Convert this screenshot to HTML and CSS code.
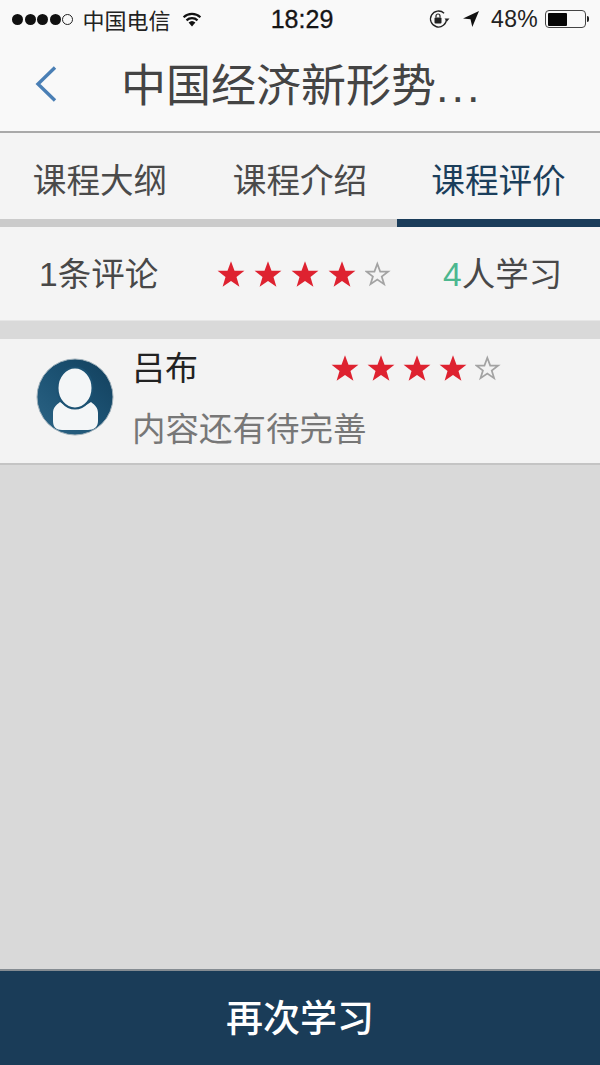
FILE: index.html
```html
<!DOCTYPE html>
<html lang="zh-CN">
<head>
<meta charset="utf-8">
<title>中国经济新形势</title>
<link rel="stylesheet" href="styles.css">
</head>
<body>
<div class="app">
  <header class="top">
    <div class="status">
      <div class="status-left">
        <span class="signal"><i></i><i></i><i></i><i></i><i class="off"></i></span>
        <span class="carrier">中国电信</span>
        <svg class="wifi" width="22" height="16" viewBox="0 0 22 16"><path d="M11 15.500 7.600 11.600a5 5 0 0 1 6.800 0z" fill="#111"/><path d="M5.500 9.400a8 8 0 0 1 11 0M2.600 6.200a12.400 12.400 0 0 1 16.800 0" fill="none" stroke="#111" stroke-width="2.200"/></svg>
      </div>
      <span class="clock">18:29</span>
      <div class="status-right">
        <svg class="lock" width="22" height="20" viewBox="0 0 22 20"><path d="M18.500 10a8 8 0 1 1-2.400-5.700" fill="none" stroke="#222" stroke-width="1.300"/><path d="M21.500 9.500h-5l2.500 3z" fill="#222"/><rect x="6.500" y="8.500" width="7" height="6" rx="1" fill="#222"/><path d="M8 8.500V7a2 2 0 0 1 4 0v1.500" fill="none" stroke="#222" stroke-width="1.200"/></svg>
        <svg class="arrow" width="18" height="18" viewBox="0 0 18 18"><path d="M17 1 1 8.500l7.500.8 1.800 7.700z" fill="#111"/></svg>
        <span class="pct">48%</span>
        <span class="battery"><span class="level"></span></span>
        <span class="nub"></span>
      </div>
    </div>
    <div class="nav">
      <svg class="back" width="24" height="38" viewBox="0 0 24 38"><path d="M21 2.500 4 19l17 16.500" fill="none" stroke="#4a7fb5" stroke-width="3.400"/></svg>
      <h1 class="title">中国经济新形势<span class="dots">...</span></h1>
    </div>
  </header>

  <nav class="tabs">
    <span class="tab">课程大纲</span>
    <span class="tab">课程介绍</span>
    <span class="tab active">课程评价</span>
  </nav>

  <section class="summary">
    <span class="count">1条评论</span>
    <span class="stars big">
      <svg class="star" viewBox="0 0 24 24"><use href="#full"/></svg>
      <svg class="star" viewBox="0 0 24 24"><use href="#full"/></svg>
      <svg class="star" viewBox="0 0 24 24"><use href="#full"/></svg>
      <svg class="star" viewBox="0 0 24 24"><use href="#full"/></svg>
      <svg class="star" viewBox="0 0 24 24"><use href="#empty"/></svg>
    </span>
    <span class="learners"><b>4</b>人学习</span>
  </section>

  <section class="review">
    <svg class="avatar" viewBox="0 0 78 78">
      <defs><linearGradient id="ava" x1="0" y1="1" x2="1" y2="0"><stop offset="0" stop-color="#2d6586"/><stop offset=".5" stop-color="#1c5273"/><stop offset="1" stop-color="#123f5c"/></linearGradient></defs>
      <circle cx="39" cy="39" r="38" fill="url(#ava)" stroke="#9fb0ba" stroke-width="1"/>
      <path d="M24 44c-4 3-7 6-7 11v8c0 6 3 9 9 9h26c6 0 10-3 10-9v-8c0-5-3-8-7-11-9 7-22 7-31 0z" fill="#f4f6f7"/>
      <ellipse cx="39" cy="30" rx="17.500" ry="20.500" fill="#f4f6f7" stroke="#1c5273" stroke-width="2"/>
    </svg>
    <div class="review-body">
      <div class="review-head">
        <span class="name">吕布</span>
        <span class="stars small">
          <svg class="star" viewBox="0 0 24 24"><use href="#full"/></svg>
          <svg class="star" viewBox="0 0 24 24"><use href="#full"/></svg>
          <svg class="star" viewBox="0 0 24 24"><use href="#full"/></svg>
          <svg class="star" viewBox="0 0 24 24"><use href="#full"/></svg>
          <svg class="star" viewBox="0 0 24 24"><use href="#empty"/></svg>
        </span>
      </div>
      <p class="comment">内容还有待完善</p>
    </div>
  </section>

  <main class="empty"></main>

  <footer class="cta">再次学习</footer>
</div>

<svg class="defs" width="0" height="0">
  <defs>
    <polygon id="full" points="12,1 15,9.200 23.500,9.200 16.700,14.500 19.200,23 12,18 4.800,23 7.300,14.500 .5,9.200 9,9.200" fill="#de2230"/>
    <polygon id="empty" transform="translate(0 1.400) scale(.88)" points="12,2 14.800,9.700 22.500,9.700 16.300,14.500 18.600,22 12,17.500 5.400,22 7.700,14.500 1.500,9.700 9.200,9.700" fill="none" stroke="#a3a3a3" stroke-width="1.700"/>
  </defs>
</svg>
</body>
</html>
```

FILE: styles.css
```css
* { box-sizing: border-box; }
html, body { margin: 0; padding: 0; }
body {
  font-family: "Liberation Sans", "Noto Sans CJK SC", sans-serif;
  background: #d9d9d9;
}
.app {
  width: 600px;
  height: 1065px;
  display: flex;
  flex-direction: column;
  overflow: hidden;
}
.top {
  height: 133px;
  background: #f9f9f9;
  border-bottom: 2px solid #a9a9a9;
  flex: none;
}
.status {
  height: 38px;
  display: grid;
  grid-template-columns: 1fr auto 1fr;
  align-items: center;
  padding: 0 11px 0 12px;
  color: #161616;
}
.status-left, .status-right { display: flex; align-items: center; }
.status-right { justify-content: flex-end; }
.signal { display: flex; gap: 1.600px; }
.signal i {
  width: 11px; height: 11px; border-radius: 50%;
  background: #111;
}
.signal i.off { background: none; border: 1px solid #222; }
.carrier { font-size: 22px; margin-left: 9px; color: #222; }
.wifi { margin-left: 11px; }
.clock { font-size: 25px; font-weight: 400; -webkit-text-stroke: .3px #111; margin-left: 3px; }
.lock { margin-right: 12px; }
.arrow { margin-right: 11px; }
.pct { font-size: 23px; letter-spacing: .3px; color: #222; margin-right: 7px; }
.battery {
  width: 41px; height: 18px;
  border: 1.500px solid #444; border-radius: 4px;
  padding: 1.500px;
  display: flex;
}
.level { width: 19px; background: #060606; border-radius: 1px; }
.nub { width: 2px; height: 6px; background: #222; margin-left: 1px; border-radius: 0 2px 2px 0; }
.nav {
  height: 93px;
  display: flex;
  align-items: center;
  padding: 0 0 0 34px;
}
.back { margin-top: -2px; }
.title {
  margin: -5px 0 0 63px;
  font-size: 45px;
  font-weight: 400;
  color: #444;
  white-space: nowrap;
}
.dots { letter-spacing: 3px; }
.tabs {
  height: 94px;
  display: grid;
  grid-template-columns: 200px 200px 200px;
  background: #f4f4f4;
  flex: none;
}
.tab {
  display: flex;
  align-items: center;
  justify-content: center;
  height: 94px;
  padding-top: 4px;
  font-size: 33.600px;
  color: #4a4a4a;
  border-bottom: 8px solid #cbcbcb;
}
.tab.active { color: #1b3e5b; border-bottom-color: #1a3c5a; margin-left: -3px; }
.summary {
  height: 94px;
  background: #f4f4f4;
  border-bottom: 1px solid #e6e6e6;
  display: grid;
  grid-template-columns: 178px 226px 1fr;
  align-items: center;
  padding-left: 39px;
  flex: none;
}
.count, .learners { font-size: 33.500px; color: #484848; margin-top: -4px; }
.learners b { font-weight: 400; color: #4cb78f; }
.stars { display: flex; }
.star { display: block; flex: none; }
.big { gap: 9px; margin-top: 1px; }
.big .star { width: 28px; height: 28px; }
.small { gap: 8px; margin: 2px 0 0 2px; }
.small .star { width: 28px; height: 28px; }
.review {
  margin-top: 18px;
  height: 126px;
  background: #f3f3f3;
  border-bottom: 2px solid #c4c4c4;
  display: flex;
  padding: 0 0 0 36px;
  flex: none;
}
.avatar { width: 78px; height: 78px; margin-top: 19px; flex: none; }
.review-body { margin-left: 18px; flex: 1; }
.review-head { display: flex; align-items: center; height: 56px; }
.name { font-size: 33px; color: #222; width: 197px; margin-top: -2px; }
.comment { margin: 7px 0 0; font-size: 33.500px; color: #777; }
.empty { flex: 1; background: #d9d9d9; }
.cta {
  height: 96px;
  padding-bottom: 4px;
  background: #1a3c58;
  border-top: 2px solid #858c92;
  color: #fff;
  font-size: 37px;
  font-weight: 500;
  display: flex;
  align-items: center;
  justify-content: center;
  flex: none;
}
.defs { position: absolute; }
```
